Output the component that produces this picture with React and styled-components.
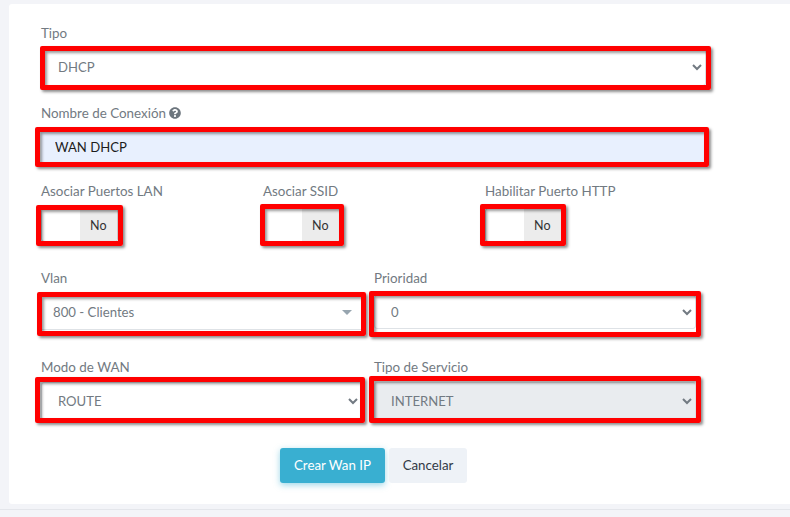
import React from 'react';
import styled, { createGlobalStyle } from 'styled-components';
import { FaQuestionCircle } from 'react-icons/fa';

const GlobalStyle = createGlobalStyle`
  html, body {
    margin: 0;
    padding: 0;
    background: #f3f4f8;
    font-family: "Lato", "Liberation Sans", sans-serif;
    overflow: hidden;
  }
`;

const Page = styled.div`
  width: 790px;
  height: 517px;
  padding: 4px 0 0 9px;
  box-sizing: border-box;
  overflow: hidden;
`;

const Card = styled.div`
  height: 500px;
  box-sizing: border-box;
  padding: 19px 0 0 32px;
  background: #fff;
  border-radius: 3px 0 0 3px;
`;

const Footer = styled.div`
  margin: 5px 0 0 -9px;
  border-top: 1px solid #e4e6eb;
`;

const Field = styled.div`
  margin-bottom: ${(p) => p.$gap || 0}px;
`;

const Label = styled.label`
  display: flex;
  align-items: center;
  gap: 3px;
  height: 20px;
  margin-bottom: ${(p) => p.$gap ?? 5}px;
  font-size: 13.4px;
  color: #727a82;
`;

const Control = styled.div`
  position: relative;
  width: ${(p) => (p.$width ? `${p.$width}px` : 'auto')};
`;

const Mark = styled.div`
  position: absolute;
  top: ${(p) => p.$t}px;
  right: ${(p) => p.$r}px;
  bottom: ${(p) => p.$b}px;
  left: ${(p) => p.$l}px;
  border: 5px solid #ff0000;
  border-radius: 2px;
  box-shadow: 2px 2px 3px rgba(0, 0, 0, 0.45), inset 2px 2px 3px rgba(0, 0, 0, 0.4);
  pointer-events: none;
`;

const Select = styled.select`
  display: block;
  width: 100%;
  height: ${(p) => p.$height || 38}px;
  padding: 0 0 0 12px;
  border: 1px solid #dee2e6;
  border-radius: 3px;
  background-color: ${(p) => (p.disabled ? '#e9ecef' : '#fff')};
  color: #727a82;
  opacity: 1;
  font-family: inherit;
  font-size: 13.1px;
`;

const TextInput = styled.input`
  display: block;
  width: 100%;
  height: 38px;
  box-sizing: border-box;
  padding: 0 13px;
  border: 1px solid #e8f0fe;
  border-radius: 3px;
  background: #e8f0fe;
  color: #1c1c1c;
  font-family: inherit;
  font-size: 13.1px;
`;

const Select2 = styled.div`
  display: flex;
  align-items: center;
  justify-content: space-between;
  height: 35px;
  box-sizing: border-box;
  padding: 0 10px 0 12px;
  border-bottom: 1px solid #dee2e6;
  background: #fff;
  color: #727a82;
  font-size: 13.2px;
`;

const Caret = styled.span`
  width: 0;
  height: 0;
  border-left: 5px solid transparent;
  border-right: 5px solid transparent;
  border-top: 5px solid #97a5af;
`;

const ToggleRow = styled.div`
  display: grid;
  grid-template-columns: repeat(3, 222px);
  margin-bottom: 26px;
`;

const Toggle = styled.div`
  display: grid;
  grid-template-columns: 1fr 1fr;
  height: 34px;
  box-sizing: border-box;
  border: 1px solid #ccc;
  border-radius: 3px;
  overflow: hidden;
`;

const ToggleOff = styled.span`
  display: flex;
  align-items: center;
  justify-content: center;
  background: #ececec;
  color: #333;
  font-size: 12.5px;
`;

const TwoCols = styled.div`
  display: grid;
  grid-template-columns: 321px 322px;
  column-gap: 12px;
  margin-bottom: ${(p) => p.$gap}px;
`;

const Actions = styled.div`
  display: flex;
  gap: 4px;
  margin-left: 239px;
`;

const Button = styled.button`
  height: 35px;
  width: ${(p) => p.$width}px;
  padding: 0 0 2px;
  border: none;
  border-radius: 3px;
  background: ${(p) => (p.$primary ? '#39afd1' : '#eef2f7')};
  color: ${(p) => (p.$primary ? '#fff' : '#323a46')};
  box-shadow: ${(p) => (p.$primary ? '0 2px 6px 0 rgba(57, 175, 209, 0.5)' : 'none')};
  font-family: inherit;
  font-size: 13.3px;
`;

const SwitchField = ({ label, mark }) => (
  <Field>
    <Label $gap={7}>{label}</Label>
    <Control $width={77}>
      <Toggle>
        <span />
        <ToggleOff>No</ToggleOff>
      </Toggle>
      <Mark {...mark} />
    </Control>
  </Field>
);

const App = () => {
  return (
    <Page>
      <GlobalStyle />
      <Card>
        <Field $gap={17}>
          <Label>Tipo</Label>
          <Control $width={665}>
            <Select defaultValue="DHCP">
              <option>DHCP</option>
            </Select>
            <Mark $t={-2} $r={-5} $b={-4} $l={-1} />
          </Control>
        </Field>

        <Field $gap={15}>
          <Label>
            Nombre de Conexión <FaQuestionCircle size={12} color="#6c757d" />
          </Label>
          <Control $width={664}>
            <TextInput defaultValue="WAN DHCP" />
            <Mark $t={-1} $r={-4} $b={-1} $l={-6} />
          </Control>
        </Field>

        <ToggleRow>
          <SwitchField label="Asociar Puertos LAN" mark={{ $t: -3, $r: -5, $b: -4, $l: -5 }} />
          <SwitchField label="Asociar SSID" mark={{ $t: -4, $r: -4, $b: -4, $l: -3 }} />
          <SwitchField label="Habilitar Puerto HTTP" mark={{ $t: -4, $r: -4, $b: -4, $l: -5 }} />
        </ToggleRow>

        <TwoCols $gap={27}>
          <Field>
            <Label $gap={7}>Vlan</Label>
            <Control>
              <Select2>
                800 - Clientes
                <Caret />
              </Select2>
              <Mark $t={-3} $r={-4} $b={-6} $l={-4} />
            </Control>
          </Field>
          <Field>
            <Label $gap={7}>Prioridad</Label>
            <Control>
              <Select $height={34} defaultValue="0">
                <option>0</option>
              </Select>
              <Mark $t={-4} $r={-5} $b={-8} $l={-5} />
            </Control>
          </Field>
        </TwoCols>

        <TwoCols $gap={28}>
          <Field>
            <Label>Modo de WAN</Label>
            <Control>
              <Select defaultValue="ROUTE">
                <option>ROUTE</option>
              </Select>
              <Mark $t={-5} $r={-3} $b={-3} $l={-6} />
            </Control>
          </Field>
          <Field>
            <Label>Tipo de Servicio</Label>
            <Control>
              <Select disabled defaultValue="INTERNET">
                <option>INTERNET</option>
              </Select>
              <Mark $t={-6} $r={-5} $b={-3} $l={-5} />
            </Control>
          </Field>
        </TwoCols>

        <Actions>
          <Button $primary $width={105}>Crear Wan IP</Button>
          <Button $width={78}>Cancelar</Button>
        </Actions>
      </Card>
      <Footer />
    </Page>
  );
};

export default App;
